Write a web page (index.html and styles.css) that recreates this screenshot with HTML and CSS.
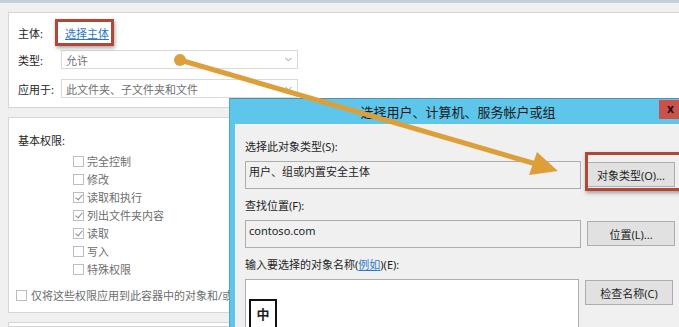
FILE: index.html
```html
<!DOCTYPE html>
<html lang="zh-CN">
<head>
    <meta charset="UTF-8">
    <meta name="viewport" content="width=device-width, initial-scale=1.0">
    <title>权限项目</title>
    <link rel="stylesheet" href="styles.css">
</head>
<body>

    <div class="topline"></div>
    <div class="page">
        <div class="panel top-panel">
            <div class="row row-principal">
                <span class="label">主体:</span>
                <a class="link principal-link" href="#">选择主体</a>
            </div>
            <div class="row row-type">
                <span class="label">类型:</span>
                <div class="select">
                    <span>允许</span>
                    <svg class="chevron" width="7" height="5" viewBox="0 0 7 5"><polyline points="0.5,0.8 3.5,4 6.5,0.8" fill="none" stroke="#9a9a9a" stroke-width="1"/></svg>
                </div>
            </div>
            <div class="row row-apply">
                <span class="label">应用于:</span>
                <div class="select">
                    <span>此文件夹、子文件夹和文件</span>
                    <svg class="chevron" width="7" height="5" viewBox="0 0 7 5"><polyline points="0.5,0.8 3.5,4 6.5,0.8" fill="none" stroke="#9a9a9a" stroke-width="1"/></svg>
                </div>
            </div>
        </div>

        <div class="panel perm-panel">
            <div class="perm-title">基本权限:</div>
            <ul class="perm-list">
                <li><span class="box"></span>完全控制</li>
                <li><span class="box"></span>修改</li>
                <li><span class="box checked"></span>读取和执行</li>
                <li><span class="box checked"></span>列出文件夹内容</li>
                <li><span class="box checked"></span>读取</li>
                <li><span class="box"></span>写入</li>
                <li><span class="box"></span>特殊权限</li>
            </ul>
            <div class="apply-only"><span class="box"></span>仅将这些权限应用到此容器中的对象和/或容器</div>
        </div>

        <div class="panel bottom-panel"></div>
    </div>

    <!-- 选择用户对话框 -->
    <div class="dialog">
        <div class="titlebar">
            <span class="title">选择用户、计算机、服务帐户或组</span>
            <span class="close">x</span>
        </div>
        <div class="dlg-body">
            <div class="field-label">选择此对象类型(S):</div>
            <div class="field-row">
                <div class="textbox">用户、组或内置安全主体</div>
                <button class="btn">对象类型(O)...</button>
            </div>
            <div class="field-label">查找位置(F):</div>
            <div class="field-row">
                <div class="textbox">contoso.com</div>
                <button class="btn">位置(L)...</button>
            </div>
            <div class="field-label">输入要选择的对象名称(<a class="link" href="#">例如</a>)(E):</div>
            <div class="field-row names-row">
                <div class="textarea"></div>
                <button class="btn">检查名称(C)</button>
            </div>
        </div>
    </div>

    <div class="ime">中</div>

    <!-- 标注 -->
    <div class="highlight hl-principal"></div>
    <div class="highlight hl-objtype"></div>
    <svg class="arrow" width="679" height="327" viewBox="0 0 679 327">
        <line x1="180" y1="60" x2="536" y2="164" stroke="#dc9f3a" stroke-width="5" stroke-linecap="round"/>
        <circle cx="180" cy="60" r="6" fill="#dc9f3a"/>
        <polygon points="558,171 529,175 537,152" fill="#dc9f3a"/>
    </svg>

</body>
</html>
```

FILE: styles.css
```css
body {
    margin: 0;
    width: 679px;
    height: 327px;
    overflow: hidden;
    position: relative;
    background-color: #f0f0f0;
    font-family: "Noto Sans", "Noto Sans CJK SC", sans-serif;
    font-size: 11px;
    color: #1e1e1e;
}
.topline {
    height: 3px;
    background-color: #c3d0d9;
}
.page {
    padding: 9px 0 0 8px;
}
.panel {
    box-sizing: border-box;
    background-color: #fff;
    border: 1px solid #d6d6d6;
    border-right: none;
    padding-left: 9px;
}
.top-panel {
    height: 96px;
    padding-top: 10px;
}
.row {
    display: flex;
    align-items: center;
}
.label {
    width: 43px;
}
.row-principal {
    height: 20px;
}
.row-type {
    margin-top: 7px;
}
.row-apply {
    margin-top: 10px;
}
.link {
    color: #2f78c6;
    text-decoration: underline;
}
.principal-link {
    margin-left: 4px;
}
.select {
    box-sizing: border-box;
    width: 237px;
    height: 19px;
    border: 1px solid #d9d9d9;
    padding: 0 5px 0 4px;
    display: flex;
    align-items: center;
    justify-content: space-between;
    color: #707070;
}
.perm-panel {
    height: 196px;
    margin-top: 9px;
    padding-top: 15px;
}
.perm-title {
    height: 16px;
    line-height: 16px;
}
.perm-list {
    list-style: none;
    margin: 3px 0 0 55px;
    padding: 0;
}
.perm-list li {
    height: 18px;
    display: flex;
    align-items: center;
    color: #6d6d6d;
}
.box {
    box-sizing: border-box;
    width: 11px;
    height: 11px;
    border: 1px solid #bdbdbd;
    margin-right: 3px;
    position: relative;
}
.box.checked::after {
    content: "";
    position: absolute;
    left: 3px;
    top: 0;
    width: 3px;
    height: 6px;
    border: solid #8a8a8a;
    border-width: 0 1px 1px 0;
    transform: rotate(40deg);
}
.apply-only {
    margin: 8px 0 0 -2px;
    height: 18px;
    display: flex;
    align-items: center;
    color: #6d6d6d;
    white-space: nowrap;
}
.apply-only .box {
    margin-right: 4px;
}
.bottom-panel {
    height: 5px;
    margin-top: 9px;
}

.dialog {
    position: absolute;
    left: 229px;
    top: 98px;
    width: 460px;
    height: 229px;
    background-color: #5ec6ea;
    border-top: 1px solid #5a8da6;
    border-left: 1px solid #4aa7cc;
    padding-left: 5px;
    box-sizing: border-box;
}
.titlebar {
    height: 25px;
    display: flex;
    align-items: center;
    position: relative;
}
.title {
    width: 100%;
    text-align: center;
    margin-left: -4px;
    font-size: 13px;
    color: #1a1a1a;
}
.close {
    position: absolute;
    left: 424px;
    top: 1px;
    width: 30px;
    height: 19px;
    background-color: #c9524a;
    color: #2a1010;
    font-weight: bold;
    font-size: 12px;
    line-height: 17px;
    padding-left: 8px;
    box-sizing: border-box;
}
.dlg-body {
    background-color: #f0f0f0;
    height: 203px;
    padding: 15px 0 0 10px;
    box-sizing: border-box;
    overflow: hidden;
}
.field-label {
    height: 16px;
    line-height: 16px;
    margin-bottom: 6px;
}
.field-row {
    display: flex;
    align-items: flex-start;
    gap: 6px;
    margin-bottom: 9px;
}
.textbox {
    box-sizing: border-box;
    width: 336px;
    height: 28px;
    border: 1px solid #adadad;
    padding: 2px 0 0 3px;
    line-height: 16px;
}
.btn {
    box-sizing: border-box;
    width: 88px;
    height: 25px;
    margin-top: 1px;
    background-color: #e1e1e1;
    border: 1px solid #adadad;
    font-family: inherit;
    font-size: 11px;
    color: #1e1e1e;
    padding: 0;
}
.names-row {
    margin-top: 3px;
}
.textarea {
    box-sizing: border-box;
    width: 334px;
    height: 60px;
    background-color: #fff;
    border: 1px solid #adadad;
}
.ime {
    position: absolute;
    left: 249px;
    top: 299px;
    width: 28px;
    height: 28px;
    box-sizing: border-box;
    border: 2px solid #111;
    border-bottom: none;
    background-color: #fff;
    font-family: "Noto Sans CJK SC", sans-serif;
    font-weight: bold;
    font-size: 13px;
    text-align: center;
    line-height: 26px;
}
.highlight {
    position: absolute;
    border: 3px solid #b04838;
    box-shadow: 1px 2px 4px rgba(0, 0, 0, 0.35);
}
.hl-principal {
    left: 55px;
    top: 19px;
    width: 53px;
    height: 21px;
}
.hl-objtype {
    left: 585px;
    top: 152px;
    width: 100px;
    height: 33px;
}
.arrow {
    position: absolute;
    left: 0;
    top: 0;
}
```
